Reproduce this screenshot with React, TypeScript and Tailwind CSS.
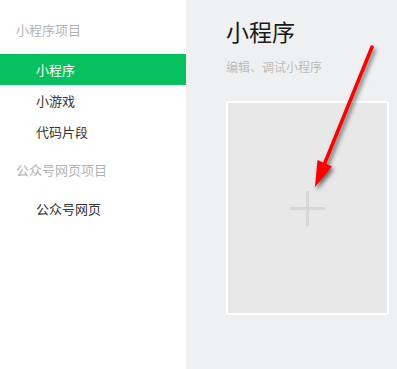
const font = { fontFamily: '"Noto Sans CJK SC", "Liberation Sans", sans-serif' }

const SideItem = ({ label, active }: { label: string; active?: boolean }) => (
  <div
    className={`h-[31px] flex items-center pl-[36px] text-[13px] leading-[16px] ${
      active ? 'bg-[#07c160] text-white' : 'text-[#353535]'
    }`}
  >
    {label}
  </div>
)

const App = () => {
  return (
    <div className="relative flex w-[397px] h-[369px] overflow-hidden" style={font}>
      {/* Sidebar */}
      <div className="w-[186px] h-full bg-white flex flex-col">
        <div className="h-[54px] pt-[22px] pl-[16px] text-[13px] leading-[16px] text-[#b2b2b2]">小程序项目</div>
        <SideItem label="小程序" active />
        <SideItem label="小游戏" />
        <SideItem label="代码片段" />
        <div className="h-[46px] pt-[15px] pl-[16px] text-[13px] leading-[16px] text-[#b2b2b2]">公众号网页项目</div>
        <SideItem label="公众号网页" />
      </div>

      {/* Main */}
      <div className="flex-1 h-full bg-[#eff0f2] pl-[40px] pt-[17px]">
        <h1 className="text-[23px] leading-[28px] text-[#1a1a1a]">小程序</h1>
        <p className="mt-[14px] text-[12px] leading-[16px] text-[#bcbcbc]">编辑、调试小程序</p>
        <div className="mt-[26px] w-[163px] h-[214px] rounded-[3px] bg-white p-[2px]">
          <div className="w-full h-full bg-[#e8e8e8] flex items-center justify-center">
            <div className="relative w-[35px] h-[35px]">
              <div className="absolute left-0 top-[16px] w-[35px] h-[3px] bg-[#d7d7d7]" />
              <div className="absolute top-0 left-[16px] w-[3px] h-[35px] bg-[#d7d7d7]" />
            </div>
          </div>
        </div>
      </div>

      {/* Annotation arrow */}
      <svg
        className="absolute left-0 top-0 pointer-events-none drop-shadow-[2px_3px_2px_rgba(0,0,0,0.55)]"
        width="397"
        height="369"
        viewBox="0 0 397 369"
      >
        <line x1="372" y1="47" x2="324" y2="165" stroke="#ff0000" strokeWidth="3.5" strokeLinecap="round" />
        <polygon points="315,187 317.5,160 332,166.5" fill="#ff0000" />
      </svg>
    </div>
  )
}

export default App
